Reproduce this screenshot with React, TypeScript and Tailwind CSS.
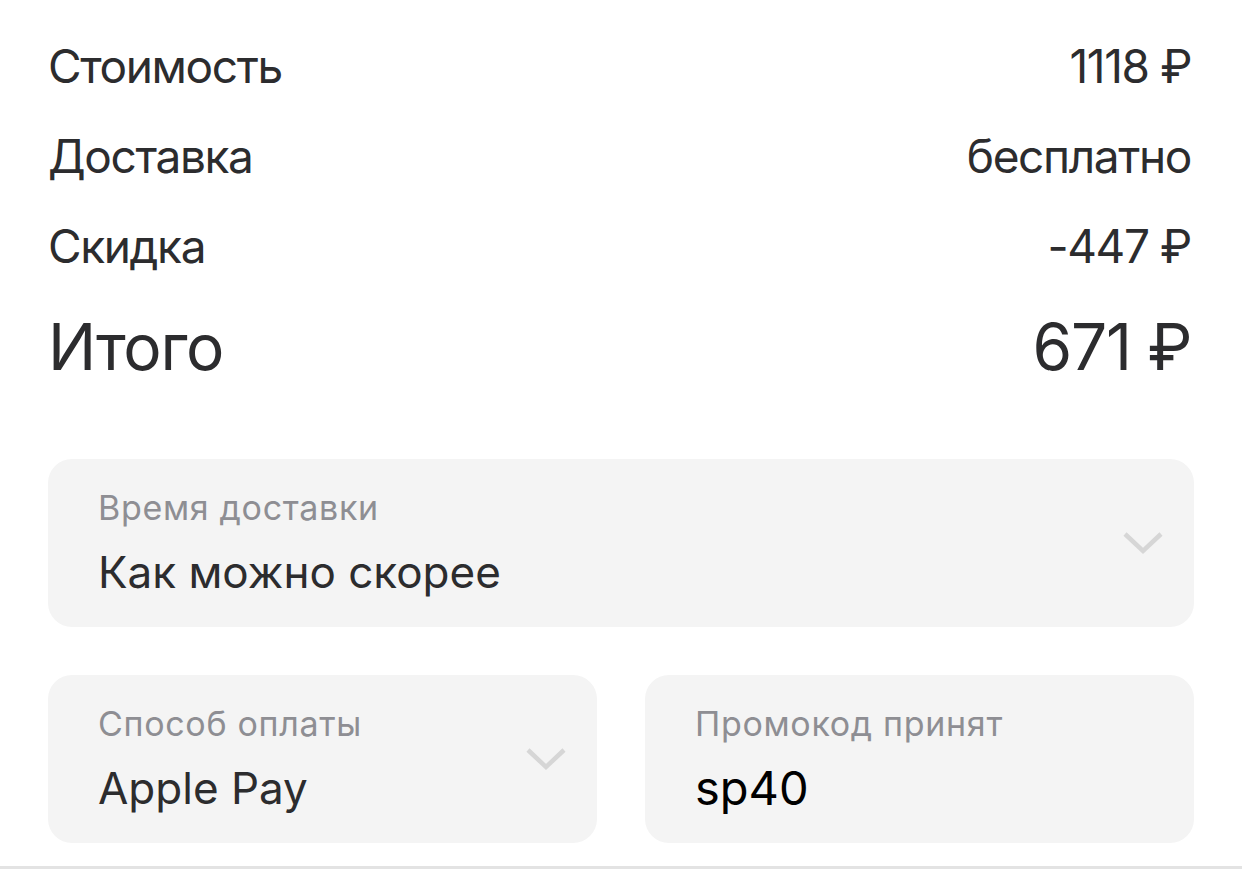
const font = { fontFamily: "Inter, 'Noto Sans', sans-serif" };

type Line = { label: string; value: string };

const lines: Line[] = [
  { label: "Стоимость", value: "1118 ₽" },
  { label: "Доставка", value: "бесплатно" },
  { label: "Скидка", value: "-447 ₽" },
];

function Chevron() {
  return (
    <svg width="40" height="24" viewBox="0 0 40 24" fill="none">
      <path d="M2 3 L20 20 L38 3" stroke="#d6d6d6" strokeWidth="4.5" />
    </svg>
  );
}

function Field(props: { label: string; value: string; chevron?: boolean; black?: boolean; className?: string }) {
  return (
    <div className={"flex h-[168px] items-center justify-between rounded-[24px] bg-[#f4f4f4] pl-[50px] pr-[31px] " + (props.className ?? "")}>
      <div className="flex flex-col">
        <div className="text-[34px] leading-[40px] tracking-[0.02em] text-[#8e8e93]">{props.label}</div>
        {props.black ? (
          <div className="mt-[18px] text-[47px] leading-[52px] text-black">{props.value}</div>
        ) : (
          <div className="mt-[18px] text-[44px] leading-[52px] text-[#2c2c2e]">{props.value}</div>
        )}
      </div>
      {props.chevron && <Chevron />}
    </div>
  );
}

export default function App() {
  return (
    <div className="min-h-[876px] w-full bg-white" style={font}>
      <div className="px-12 pt-[21px]">
        {lines.map((l) => (
          <div key={l.label} className="flex h-[90px] items-center justify-between text-[46px] tracking-[-0.03em] text-[#2c2c2e]">
            <span>{l.label}</span>
            <span className="pr-[3px]">{l.value}</span>
          </div>
        ))}
        <div className="flex h-[112px] items-center justify-between text-[64px] tracking-[-0.02em] text-[#2c2c2e]">
          <span>Итого</span>
          <span className="pr-[3px]">671 ₽</span>
        </div>

        <Field className="mt-[56px]" label="Время доставки" value="Как можно скорее" chevron />

        <div className="mt-12 grid grid-cols-2 gap-12">
          <Field label="Способ оплаты" value="Apple Pay" chevron />
          <Field label="Промокод принят" value="sp40" black />
        </div>
      </div>
      <div className="mt-[23px] h-[3px] w-full bg-[#e3e3e3]" />
    </div>
  );
}
